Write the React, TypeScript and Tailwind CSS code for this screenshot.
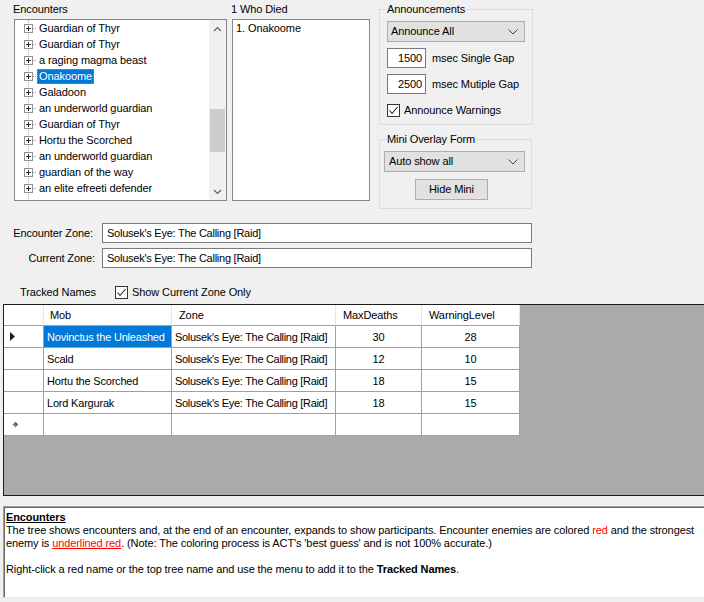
import React from "react";

const treeItems = [
  "Guardian of Thyr",
  "Guardian of Thyr",
  "a raging magma beast",
  "Onakoome",
  "Galadoon",
  "an underworld guardian",
  "Guardian of Thyr",
  "Hortu the Scorched",
  "an underworld guardian",
  "guardian of the way",
  "an elite efreeti defender",
  "an elite efreeti defender",
];

const rows = [
  { mob: "Novinctus the Unleashed", max: "30", warn: "28" },
  { mob: "Scald", max: "12", warn: "10" },
  { mob: "Hortu the Scorched", max: "18", warn: "15" },
  { mob: "Lord Kargurak", max: "18", warn: "15" },
];

const ZONE = "Solusek's Eye: The Calling [Raid]";

function TreeGlyph() {
  return (
    <svg width="22" height="16" className="shrink-0">
      <line x1="13.5" y1="0" x2="13.5" y2="16" stroke="#a0a0a0" strokeDasharray="1 1" />
      <line x1="18" y1="8.5" x2="23" y2="8.5" stroke="#a0a0a0" strokeDasharray="1 1" />
      <rect x="9.5" y="4.5" width="8" height="8" fill="#ffffff" stroke="#919191" />
      <line x1="11" y1="8.5" x2="16" y2="8.5" stroke="#303030" />
      <line x1="13.5" y1="6" x2="13.5" y2="11" stroke="#303030" />
    </svg>
  );
}

function Chevron({ up }: { up?: boolean }) {
  return (
    <svg width="9" height="6">
      {up ? (
        <path d="M1 5 L4.5 1.5 L8 5" fill="none" stroke="#606060" strokeWidth="1.2" />
      ) : (
        <path d="M1 1 L4.5 4.5 L8 1" fill="none" stroke="#606060" strokeWidth="1.2" />
      )}
    </svg>
  );
}

function DropChevron() {
  return (
    <svg width="10" height="6">
      <path d="M0.5 0.5 L5 5 L9.5 0.5" fill="none" stroke="#404040" strokeWidth="1" />
    </svg>
  );
}

function Check() {
  return (
    <div className="w-[13px] h-[13px] border border-[#333333] bg-white flex items-center justify-center shrink-0">
      <svg width="11" height="11">
        <path d="M1.5 5.5 L4 8.5 L9.5 2" fill="none" stroke="#202020" strokeWidth="1.1" />
      </svg>
    </div>
  );
}

export default function App() {
  return (
    <div
      className="w-[704px] h-[602px] overflow-hidden bg-[#f0f0f0] text-black text-[11px] leading-[15px] tracking-[-0.1px]"
      style={{ fontFamily: '"Liberation Sans", Arial, sans-serif' }}
    >
      {/* Top section */}
      <div className="flex h-[223px]">
        {/* Encounters */}
        <div className="ml-[13px] w-[214px] flex flex-col">
          <div className="mt-[2px] h-[14px]">Encounters</div>
          <div className="mt-[3px] ml-[1px] w-[213px] h-[182px] border border-[#828790] bg-white flex">
            <div className="flex-1 overflow-hidden">
              {treeItems.map((t, i) => (
                <div key={i} className="flex items-center h-[16px] whitespace-nowrap">
                  <TreeGlyph />
                  {i === 3 ? (
                    <span className="px-[1px] h-[15px] leading-[13px] bg-[#0078d7] text-white border border-dotted border-[#e08030]">
                      {t}
                    </span>
                  ) : (
                    <span className="px-[2px]">{t}</span>
                  )}
                </div>
              ))}
            </div>
            <div className="w-[17px] bg-[#f0f0f0] flex flex-col">
              <div className="h-[17px] flex items-center justify-center">
                <Chevron up />
              </div>
              <div className="flex-1">
                <div className="mt-[72px] h-[43px] mx-[1px] bg-[#cdcdcd]" />
              </div>
              <div className="h-[17px] flex items-center justify-center">
                <Chevron />
              </div>
            </div>
          </div>
        </div>

        {/* Who died */}
        <div className="ml-[4px] w-[139px] flex flex-col">
          <div className="mt-[2px] h-[14px]">1 Who Died</div>
          <div className="mt-[3px] ml-[1px] w-[138px] h-[182px] border border-[#828790] bg-white pl-[3px] leading-[16px]">
            1. Onakoome
          </div>
        </div>

        {/* Right groups */}
        <div className="ml-[9px] w-[153px] flex flex-col">
          <fieldset className="mt-[2px] h-[123px] border border-[#dcdcdc] px-[7px] m-0">
            <legend className="px-[1px] -ml-[1px] leading-[14px]">Announcements</legend>
            <div className="mt-[5px] w-[138px] h-[21px] bg-[#e1e1e1] border border-[#adadad] flex items-center justify-between pl-[3px] pr-[6px]">
              <span>Announce All</span>
              <DropChevron />
            </div>
            <div className="mt-[6px] flex items-center h-[20px]">
              <div className="w-[39px] h-[20px] border border-[#7a7a7a] bg-white text-right pr-[3px] leading-[18px]">
                1500
              </div>
              <span className="ml-[6px] whitespace-nowrap">msec Single Gap</span>
            </div>
            <div className="mt-[6px] flex items-center h-[20px]">
              <div className="w-[39px] h-[20px] border border-[#7a7a7a] bg-white text-right pr-[3px] leading-[18px]">
                2500
              </div>
              <span className="ml-[6px] whitespace-nowrap">msec Mutiple Gap</span>
            </div>
            <div className="mt-[10px] flex items-center h-[13px]">
              <Check />
              <span className="ml-[4px] whitespace-nowrap">Announce Warnings</span>
            </div>
          </fieldset>
          <fieldset className="mt-[7px] h-[77px] border border-[#dcdcdc] px-[4px] m-0">
            <legend className="ml-[2px] px-[1px] leading-[14px]">Mini Overlay Form</legend>
            <div className="mt-[5px] w-[141px] h-[21px] bg-[#e1e1e1] border border-[#adadad] flex items-center justify-between pl-[4px] pr-[6px]">
              <span>Auto show all</span>
              <DropChevron />
            </div>
            <div className="mt-[7px] ml-[31px] w-[73px] h-[21px] bg-[#e1e1e1] border border-[#adadad] flex items-center justify-center">
              Hide Mini
            </div>
          </fieldset>
        </div>
      </div>

      {/* Zones */}
      <div className="flex items-center h-[20px]">
        <div className="w-[102px] text-right pr-[9px]">Encounter Zone:</div>
        <div className="w-[430px] h-[20px] border border-[#7a7a7a] bg-white pl-[4px] leading-[18px] tracking-[-0.25px]">{ZONE}</div>
      </div>
      <div className="mt-[5px] flex items-center h-[20px]">
        <div className="w-[102px] text-right pr-[7px]">Current Zone:</div>
        <div className="w-[430px] h-[20px] border border-[#7a7a7a] bg-white pl-[4px] leading-[18px] tracking-[-0.25px]">{ZONE}</div>
      </div>

      {/* Tracked names */}
      <div className="mt-[16px] h-[16px] flex items-center">
        <span className="ml-[20px] w-[95px]">Tracked Names</span>
        <Check />
        <span className="ml-[4px]">Show Current Zone Only</span>
      </div>

      {/* Grid */}
      <div className="mt-[4px] ml-[3px] w-[702px] h-[192px] border border-[#1a1a1a] bg-[#ababab]">
        <div className="grid grid-cols-[40px_128px_164px_86px_98px] w-[516px]">
          {/* header */}
          <div className="h-[21px] bg-white border-r border-r-[#e5e5e5] border-b border-b-[#a0a0a0]" />
          <div className="h-[21px] bg-white border-r border-r-[#e5e5e5] border-b border-b-[#a0a0a0] pl-[6px] leading-[20px]">Mob</div>
          <div className="h-[21px] bg-white border-r border-r-[#e5e5e5] border-b border-b-[#a0a0a0] pl-[7px] leading-[20px]">Zone</div>
          <div className="h-[21px] bg-white border-r border-r-[#e5e5e5] border-b border-b-[#a0a0a0] pl-[7px] leading-[20px]">MaxDeaths</div>
          <div className="h-[21px] bg-white border-r border-r-[#e5e5e5] border-b border-b-[#a0a0a0] pl-[7px] leading-[20px]">WarningLevel</div>

          {rows.map((r, i) => (
            <React.Fragment key={i}>
              <div className="h-[22px] bg-white border-r border-b border-[#a0a0a0] flex items-center pl-[6px]">
                {i === 0 && (
                  <svg width="6" height="9">
                    <polygon points="0,0 5,4.5 0,9" fill="#202020" />
                  </svg>
                )}
              </div>
              <div
                className={
                  i === 0
                    ? "h-[22px] bg-[#0078d7] text-white border-r border-b border-[#a0a0a0] pl-[3px] leading-[22px] whitespace-nowrap overflow-hidden tracking-[-0.2px]"
                    : "h-[22px] bg-white border-r border-b border-[#a0a0a0] pl-[3px] leading-[22px] whitespace-nowrap overflow-hidden tracking-[-0.2px]"
                }
              >
                {r.mob}
              </div>
              <div className="h-[22px] bg-white border-r border-b border-[#a0a0a0] pl-[3px] leading-[22px] whitespace-nowrap overflow-hidden tracking-[-0.3px]">
                {ZONE}
              </div>
              <div className="h-[22px] bg-white border-r border-b border-[#a0a0a0] text-center leading-[22px]">{r.max}</div>
              <div className="h-[22px] bg-white border-r border-b border-[#a0a0a0] text-center leading-[22px]">{r.warn}</div>
            </React.Fragment>
          ))}
          {/* new row */}
          <div className="h-[22px] bg-white border-r border-b border-[#a0a0a0] flex items-center pl-[8px]">
            <svg width="7" height="7">
              <circle cx="3.5" cy="3.5" r="2" fill="#505050" />
              <line x1="3.5" y1="0.5" x2="3.5" y2="6.5" stroke="#808080" strokeWidth="0.8" />
              <line x1="0.5" y1="3.5" x2="6.5" y2="3.5" stroke="#808080" strokeWidth="0.8" />
            </svg>
          </div>
          <div className="h-[22px] bg-white border-r border-b border-[#a0a0a0]" />
          <div className="h-[22px] bg-white border-r border-b border-[#a0a0a0]" />
          <div className="h-[22px] bg-white border-r border-b border-[#a0a0a0]" />
          <div className="h-[22px] bg-white border-r border-b border-[#a0a0a0]" />
        </div>
      </div>

      {/* Help */}
      <div className="mt-[10px] ml-[3px] w-[701px] h-[92px] border-t border-l border-[#a0a0a0] border-b border-b-[#e3e3e3] bg-white">
        <div className="h-full border-t border-l border-[#696969] pl-[1px] pt-[3px] text-[11px] leading-[13px] tracking-[-0.1px]">
          <div className="font-bold underline">Encounters</div>
          <div className="w-[690px]">
            The tree shows encounters and, at the end of an encounter, expands to show participants. Encounter enemies are colored{" "}
            <span className="text-[#ff0000]">red</span> and the strongest enemy is{" "}
            <span className="text-[#ff0000] underline">underlined red</span>. (Note: The coloring process is ACT's 'best guess' and is not 100% accurate.)
          </div>
          <div className="h-[13px]" />
          <div>
            Right-click a red name or the top tree name and use the menu to add it to the <span className="font-bold">Tracked Names</span>.
          </div>
        </div>
      </div>
    </div>
  );
}
